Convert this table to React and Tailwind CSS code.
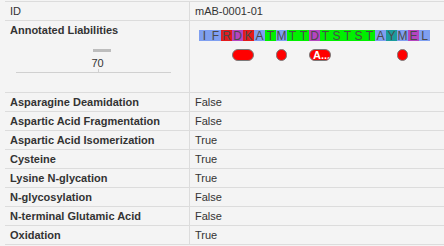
const seq = "IFRDKATMTTDTSTSTAYMEL".split("");

const colorOf = {
    I: "bg-[#7f9ff0]",
    F: "bg-[#7f9ff0]",
    A: "bg-[#7f9ff0]",
    M: "bg-[#7f9ff0]",
    L: "bg-[#7f9ff0]",
    R: "bg-[#e31a1c]",
    K: "bg-[#e31a1c]",
    D: "bg-[#b545c0]",
    E: "bg-[#b545c0]",
    T: "bg-[#00f000]",
    S: "bg-[#00f000]",
    Y: "bg-[#1a9c9c]",
};

const rows = [
    ["Asparagine Deamidation", "False"],
    ["Aspartic Acid Fragmentation", "False"],
    ["Aspartic Acid Isomerization", "True"],
    ["Cysteine", "True"],
    ["Lysine N-glycation", "True"],
    ["N-glycosylation", "False"],
    ["N-terminal Glutamic Acid", "False"],
    ["Oxidation", "True"],
];

// start index + length on the sequence
const liabilities = [
    { start: 3, len: 2 },
    { start: 7, len: 1 },
    { start: 10, len: 2, label: "A..." },
    { start: 18, len: 1 },
];

const MiniChart = () => (
    <svg width="184" height="40" className="block">
        <rect x="88" y="12" width="18" height="3" fill="#bdbdbd" />
        <text x="92.5" y="29.5" textAnchor="middle" fontSize="11" fill="#333" fontFamily="Liberation Sans, Arial, sans-serif">70</text>
        <line x1="11" y1="35.5" x2="166" y2="35.5" stroke="#d0d0d0" />
        <line x1="93.5" y1="32" x2="93.5" y2="35" stroke="#d0d0d0" />
    </svg>
);

const Sequence = () => (
    <div className="pl-[9px] pt-[9px]">
        <div className="flex">
            {seq.map((aa, i) => (
                <div key={i} className={`w-[11px] h-[11px] flex items-center justify-center text-[12px] leading-none text-[#4a4a4a] ${colorOf[aa]}`}>
                    {aa}
                </div>
            ))}
        </div>
        <div className="relative h-[20px] mt-[8px]">
            {liabilities.map((l, i) => (
                <div
                    key={i}
                    className="absolute top-0 h-[12px] rounded-full bg-[#ff0000] border border-[#7a7a7a] text-white font-bold text-[11px] leading-[10px] pl-[3px] overflow-hidden"
                    style={{ left: l.start * 11, width: l.len * 11 }}
                >
                    {l.label}
                </div>
            ))}
        </div>
    </div>
);

export default function App() {
    return (
        <div className="w-[444px] h-[246px] bg-[#f4f4f4] pl-[5px] pt-[1px] text-[11px] text-[#333] font-['Liberation_Sans',Arial,sans-serif]">
            <div className="border-y border-[#dcdcdc]">
                <div className="flex h-[18px]">
                    <div className="w-[185px] shrink-0 border-r border-[#dcdcdc] pl-[5px] leading-[18px]">ID</div>
                    <div className="pl-[5px] leading-[18px]">mAB-0001-01</div>
                </div>
                <div className="flex h-[72px] border-t border-[#dcdcdc]">
                    <div className="w-[185px] shrink-0 border-r border-[#dcdcdc]">
                        <div className="h-[16px] pl-[5px] pt-[3px] font-bold leading-[12px]">Annotated Liabilities</div>
                        <MiniChart />
                    </div>
                    <Sequence />
                </div>
                {rows.map(([label, value]) => (
                    <div key={label} className="flex h-[19px] border-t border-[#dcdcdc]">
                        <div className="w-[185px] shrink-0 border-r border-[#dcdcdc] pl-[5px] leading-[18px] font-bold">{label}</div>
                        <div className="pl-[5px] leading-[18px]">{value}</div>
                    </div>
                ))}
            </div>
        </div>
    );
}
